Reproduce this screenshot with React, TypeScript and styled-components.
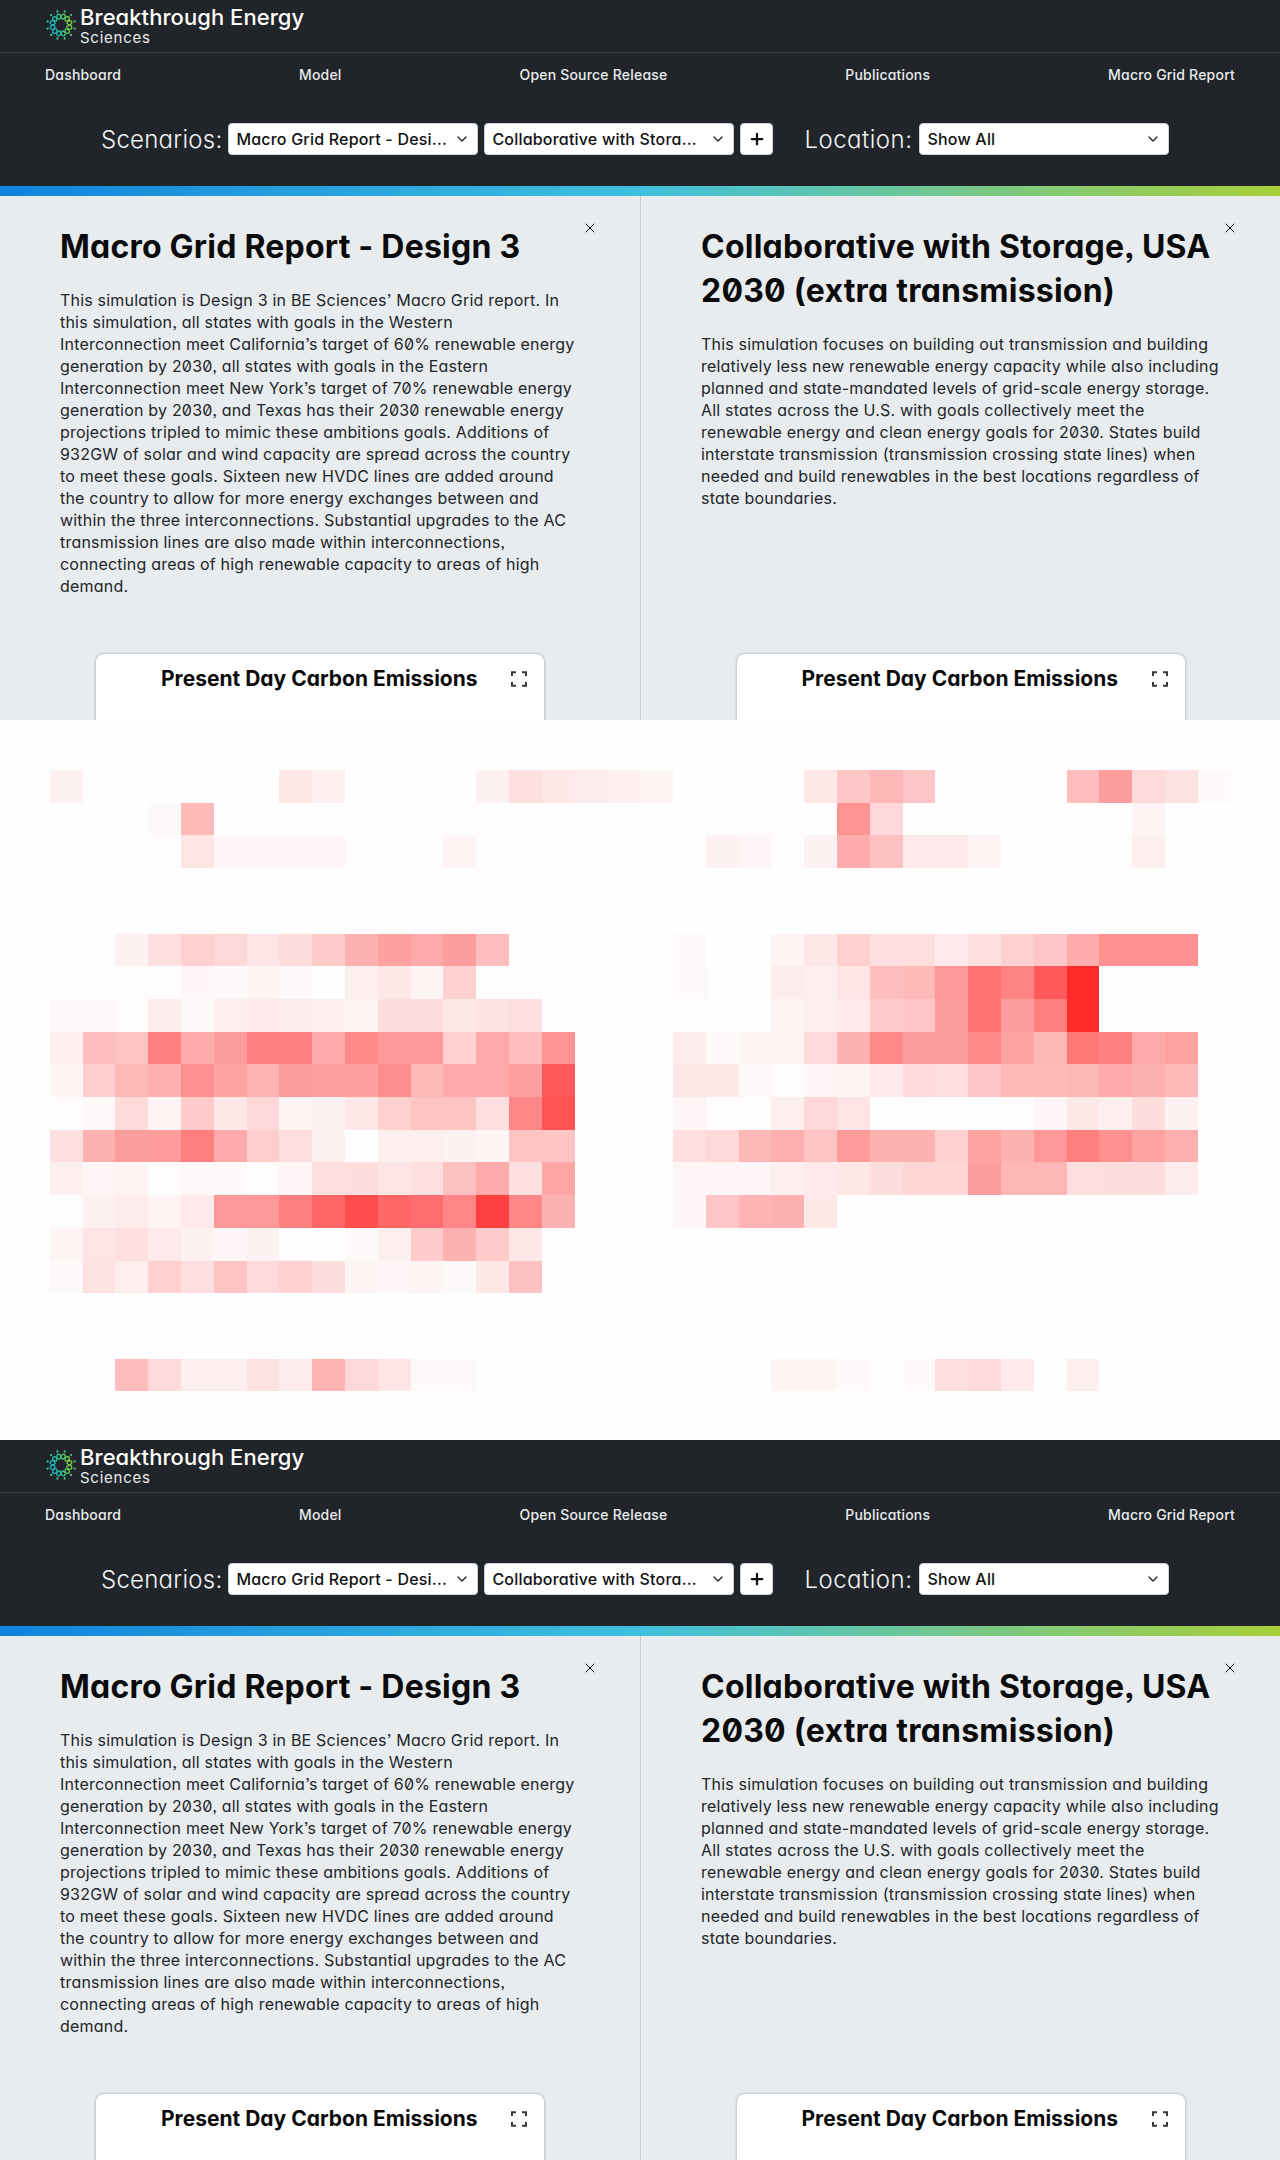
import React from "react";
import styled, { createGlobalStyle } from "styled-components";
import { ChevronDown, Plus, X } from "lucide-react";

const FONT = '"Inter", "Noto Sans", sans-serif';

const GlobalStyle = createGlobalStyle`
  html, body {
    margin: 0;
    padding: 0;
    background: #fefefe;
  }
  body {
    font-family: ${FONT};
    font-feature-settings: "cv11", "zero", "ss03";
  }
  * {
    box-sizing: border-box;
  }
`;

const NAV_ITEMS = [
  "Dashboard",
  "Model",
  "Open Source Release",
  "Publications",
  "Macro Grid Report",
];

const PANELS = [
  {
    title: ["Macro Grid Report - Design 3"],
    lines: [
      "This simulation is Design 3 in BE Sciences’ Macro Grid report. In",
      "this simulation, all states with goals in the Western",
      "Interconnection meet California’s target of 60% renewable energy",
      "generation by 2030, all states with goals in the Eastern",
      "Interconnection meet New York’s target of 70% renewable energy",
      "generation by 2030, and Texas has their 2030 renewable energy",
      "projections tripled to mimic these ambitions goals. Additions of",
      "932GW of solar and wind capacity are spread across the country",
      "to meet these goals. Sixteen new HVDC lines are added around",
      "the country to allow for more energy exchanges between and",
      "within the three interconnections. Substantial upgrades to the AC",
      "transmission lines are also made within interconnections,",
      "connecting areas of high renewable capacity to areas of high",
      "demand.",
    ],
  },
  {
    title: ["Collaborative with Storage, USA", "2030 (extra transmission)"],
    lines: [
      "This simulation focuses on building out transmission and building",
      "relatively less new renewable energy capacity while also including",
      "planned and state-mandated levels of grid-scale energy storage.",
      "All states across the U.S. with goals collectively meet the",
      "renewable energy and clean energy goals for 2030. States build",
      "interstate transmission (transmission crossing state lines) when",
      "needed and build renewables in the best locations regardless of",
      "state boundaries.",
    ],
  },
];

// [row, first column, red opacity in percent per cell]
const HEAT: [number, number, number[]][] = [
  [0, 1, [5, 1, 0, 0, 0, 0, 0, 9, 6, 0, 0, 0, 0, 5, 12, 9, 7, 6, 4, 0, 0, 0, 0, 9, 22, 28, 22, 0, 0, 0, 0, 25, 38, 14, 11, 2]],
  [1, 4, [2, 27, 0, 0, 0, 0, 0, 0, 0, 1]],
  [1, 21, [1, 1, 1, 0, 42, 15, 0, 0, 0, 0, 0, 0, 0, 4]],
  [2, 2, [1, 1, 1, 10, 3, 3, 3, 3, 1, 1, 1, 4, 1, 1, 1, 1, 1, 0, 1, 5, 3, 1, 5, 32, 24, 8, 8, 4, 0, 0, 0, 1, 6]],
  [5, 2, [1, 5, 12, 18, 15, 10, 13, 20, 30, 37, 33, 38, 25]],
  [5, 20, [2, 0, 1, 4, 9, 18, 12, 12, 8, 12, 18, 22, 32, 43, 43, 43]],
  [6, 2, [1, 1, 1, 3, 2, 4, 2, 0, 6, 9, 4, 18, 0, 1]],
  [6, 20, [2, 1, 0, 7, 6, 10, 25, 27, 40, 55, 48, 65, 83]],
  [7, 1, [2, 2, 1, 7, 2, 6, 8, 7, 6, 4, 13, 13, 9, 11, 12]],
  [7, 20, [1, 1, 1, 4, 6, 8, 20, 22, 38, 55, 38, 50, 83]],
  [8, 1, [6, 25, 23, 50, 32, 38, 50, 50, 33, 46, 40, 40, 18, 33, 25, 42]],
  [8, 20, [7, 2, 4, 4, 14, 30, 46, 38, 38, 46, 36, 28, 53, 49, 33, 36]],
  [9, 1, [4, 19, 27, 31, 43, 36, 29, 38, 37, 37, 44, 27, 33, 33, 37, 65]],
  [9, 20, [9, 9, 2, 1, 3, 4, 8, 14, 12, 22, 27, 27, 28, 33, 30, 27]],
  [10, 1, [1, 2, 14, 4, 20, 9, 15, 4, 5, 9, 18, 23, 23, 12, 47, 68]],
  [10, 20, [3, 1, 1, 6, 15, 10, 0, 1, 0, 0, 1, 3, 9, 6, 13, 5]],
  [11, 1, [12, 30, 38, 39, 50, 33, 19, 12, 5, 1, 6, 6, 5, 4, 23, 23]],
  [11, 20, [12, 15, 28, 31, 23, 39, 30, 30, 18, 36, 30, 40, 50, 43, 36, 31]],
  [12, 1, [6, 3, 4, 1, 2, 2, 1, 3, 12, 13, 10, 12, 24, 33, 12, 35]],
  [12, 20, [3, 3, 3, 6, 8, 9, 13, 16, 16, 38, 28, 28, 12, 13, 13, 7]],
  [13, 1, [1, 5, 7, 4, 8, 40, 40, 50, 60, 70, 60, 57, 47, 75, 47, 30]],
  [13, 20, [3, 22, 29, 30, 9]],
  [14, 1, [4, 10, 12, 8, 5, 3, 5, 1, 0, 2, 6, 20, 30, 20, 9]],
  [15, 1, [2, 11, 6, 18, 12, 23, 14, 18, 13, 4, 3, 4, 2, 9, 24]],
  [18, 3, [26, 14, 6, 6, 11, 7, 29, 15, 10, 2, 2]],
  [18, 23, [4, 4, 2, 1, 2, 12, 14, 8, 1, 6]],
];

const CELL_W = 32.8;
const CELL_H = 32.7;

// two wavy rings crossing each other, as in the brand mark
const wavePath = (sign: number) => {
  let d = "";
  for (let i = 0; i <= 120; i++) {
    const a = (i / 120) * Math.PI * 2;
    const r = 8.6 + sign * 2.6 * Math.cos(6 * a + Math.PI / 2);
    const x = 16 + r * Math.cos(a);
    const y = 16 + r * Math.sin(a);
    d += `${i === 0 ? "M" : "L"}${x.toFixed(2)} ${y.toFixed(2)}`;
  }
  return d + "Z";
};

const Logo = () => {
  const dots = Array.from({ length: 12 }, (_, i) => {
    const a = (i * Math.PI) / 6 + Math.PI / 12;
    return { x: 16 + 14 * Math.cos(a), y: 16 + 14 * Math.sin(a) };
  });
  return (
    <svg width="32" height="32" viewBox="0 0 32 32">
      <defs>
        <linearGradient id="logoGrad" x1="0" y1="0.6" x2="1" y2="0.4">
          <stop offset="0" stopColor="#12b3cf" />
          <stop offset="0.5" stopColor="#2cc48e" />
          <stop offset="1" stopColor="#8fd62f" />
        </linearGradient>
      </defs>
      <g fill="none" stroke="url(#logoGrad)" strokeWidth="1.3">
        <path d={wavePath(1)} />
        <path d={wavePath(-1)} />
      </g>
      {dots.map((d, i) => (
        <circle key={i} cx={d.x} cy={d.y} r="1.15" fill="url(#logoGrad)" />
      ))}
    </svg>
  );
};

const ExpandIcon = () => (
  <svg width="16" height="16" viewBox="0 0 16 16" fill="none" stroke="#343a40" strokeWidth="2">
    <path d="M1 5V1.2h4M11 1.2h4V5M15 11v3.8h-4M5 14.8H1V11" />
  </svg>
);

const Select = ({ value }: { value: string }) => (
  <SelectBox>
    <SelectText>{value}</SelectText>
    <ChevronDown size={16} strokeWidth={2} color="#212529" />
  </SelectBox>
);

const Screen = () => (
  <ScreenClip>
    <Header>
      <TopBar>
        <Logo />
        <Brand>
          <BrandName>Breakthrough Energy</BrandName>
          <BrandSub>Sciences</BrandSub>
        </Brand>
      </TopBar>
      <Nav>
        {NAV_ITEMS.map((item) => (
          <NavLink key={item}>{item}</NavLink>
        ))}
      </Nav>
      <Toolbar>
        <ToolbarLabel>Scenarios:</ToolbarLabel>
        <Select value="Macro Grid Report - Desi..." />
        <Select value="Collaborative with Stora..." />
        <AddButton>
          <Plus size={18} strokeWidth={3} color="#111" />
        </AddButton>
        <ToolbarLabel $gap>Location:</ToolbarLabel>
        <Select value="Show All" />
      </Toolbar>
    </Header>
    <GradientBar />
    <Panels>
      {PANELS.map((panel, i) => (
        <Panel key={i} $divider={i === 1}>
          <CloseButton>
            <X size={16} strokeWidth={1.5} color="#111" />
          </CloseButton>
          <Details>
            <Title>
              {panel.title.map((t) => (
                <TextLine key={t}>{t}</TextLine>
              ))}
            </Title>
            <Body>
              {panel.lines.map((l) => (
                <TextLine key={l}>{l}</TextLine>
              ))}
            </Body>
          </Details>
          <Card>
            <CardHeader>
              <CardTitle>Present Day Carbon Emissions</CardTitle>
              <ExpandIcon />
            </CardHeader>
          </Card>
        </Panel>
      ))}
    </Panels>
  </ScreenClip>
);

const HeatMap = () => (
  <MapSection>
    <svg width="1280" height="720" viewBox="0 0 1280 720" shapeRendering="crispEdges">
      {HEAT.flatMap(([row, start, values]) =>
        values.map((v, i) =>
          v === 0 ? null : (
            <rect
              key={`${row}-${start + i}`}
              x={17 + (start + i) * CELL_W}
              y={50 + row * CELL_H}
              width={CELL_W}
              height={CELL_H}
              fill={`rgba(255, 0, 0, ${v === 1 ? 0.006 : v / 100})`}
            />
          ),
        ),
      )}
    </svg>
  </MapSection>
);

export default function App() {
  return (
    <>
      <GlobalStyle />
      <Screen />
      <HeatMap />
      <Screen />
    </>
  );
}

const ScreenClip = styled.div`
  height: 720px;
  overflow: hidden;
  background: #e9ecef;
`;

const Header = styled.header`
  height: 186px;
  background: #212529;
  color: #f1f3f5;
`;

const TopBar = styled.div`
  height: 53px;
  padding: 9px 0 0 45px;
  display: flex;
  gap: 3px;
  border-bottom: 1px solid #3c4046;
`;

const Brand = styled.div`
  display: flex;
  flex-direction: column;
  margin-top: -1px;
`;

const BrandName = styled.span`
  font-size: 22px;
  line-height: 18px;
  font-weight: 500;
  letter-spacing: 0.05px;
  color: #fff;
  white-space: nowrap;
`;

const BrandSub = styled.span`
  margin-top: 4px;
  font-size: 15px;
  line-height: 16px;
  font-weight: 400;
  letter-spacing: 0.75px;
  color: #e9ecef;
`;

const Nav = styled.nav`
  height: 44px;
  padding: 11px 45px 0;
  display: flex;
  justify-content: space-between;
`;

const NavLink = styled.a`
  font-size: 14px;
  line-height: 21px;
  font-weight: 500;
  letter-spacing: 0.2px;
  color: #e9ecef;
  white-space: nowrap;
`;

const Toolbar = styled.div`
  height: 89px;
  padding: 0 0 5px 101px;
  display: flex;
  align-items: center;
  gap: 6px;
`;

const ToolbarLabel = styled.span<{ $gap?: boolean }>`
  margin: ${(p) => (p.$gap ? "0 1px 0 25px" : "0")};
  font-size: 24px;
  font-weight: 300;
  letter-spacing: ${(p) => (p.$gap ? "0.5px" : "0.25px")};
  color: #f1f3f5;
  white-space: nowrap;
`;

const SelectBox = styled.div`
  width: 250px;
  height: 32px;
  padding: 0 7px;
  display: flex;
  align-items: center;
  justify-content: space-between;
  background: #fff;
  border: 1px solid #ced4da;
  border-radius: 4px;
`;

const SelectText = styled.span`
  font-size: 16px;
  font-weight: 500;
  letter-spacing: 0.2px;
  color: #111;
  white-space: nowrap;
`;

const AddButton = styled.button`
  width: 33px;
  height: 32px;
  padding: 0;
  display: flex;
  align-items: center;
  justify-content: center;
  background: #fff;
  border: 1px solid #ced4da;
  border-radius: 4px;
`;

const GradientBar = styled.div`
  height: 10px;
  background: linear-gradient(90deg, #1083de 0%, #40c0de 50%, #a8cf38 100%);
`;

const Panels = styled.main`
  display: grid;
  grid-template-columns: 1fr 1fr;
  height: 524px;
`;

const Panel = styled.section<{ $divider: boolean }>`
  position: relative;
  padding-top: 29px;
  display: flex;
  flex-direction: column;
  align-items: center;
  border-left: ${(p) => (p.$divider ? "1px solid #c9cdd2" : "none")};
`;

const CloseButton = styled.span`
  position: absolute;
  top: 24px;
  right: 42px;
  display: flex;
`;

const Details = styled.div`
  align-self: flex-start;
  height: 429px;
  padding-left: 60px;
`;

const Title = styled.h2`
  margin: 0 0 20px;
  font-size: 32px;
  line-height: 44px;
  font-weight: 700;
  letter-spacing: 0.22px;
  color: #0b0b0c;
`;

const Body = styled.p`
  margin: 0;
  font-size: 16px;
  line-height: 22px;
  font-weight: 400;
  letter-spacing: 0.2px;
  color: #212529;
`;

const TextLine = styled.span`
  display: block;
  white-space: nowrap;
`;

const Card = styled.div`
  width: 448px;
  flex: 1;
  min-height: 200px;
  background: #fff;
  border-radius: 8px 8px 0 0;
  box-shadow: 0 0 3px rgba(73, 80, 87, 0.55);
`;

const CardHeader = styled.div`
  padding: 13px 17px 0 65px;
  display: flex;
  align-items: center;
  justify-content: space-between;
`;

const CardTitle = styled.h3`
  margin: 0;
  font-size: 21px;
  line-height: 24px;
  font-weight: 700;
  color: #0b0b0c;
  white-space: nowrap;
`;

const MapSection = styled.section`
  height: 720px;
  background: #fefefe;
  line-height: 0;
`;
